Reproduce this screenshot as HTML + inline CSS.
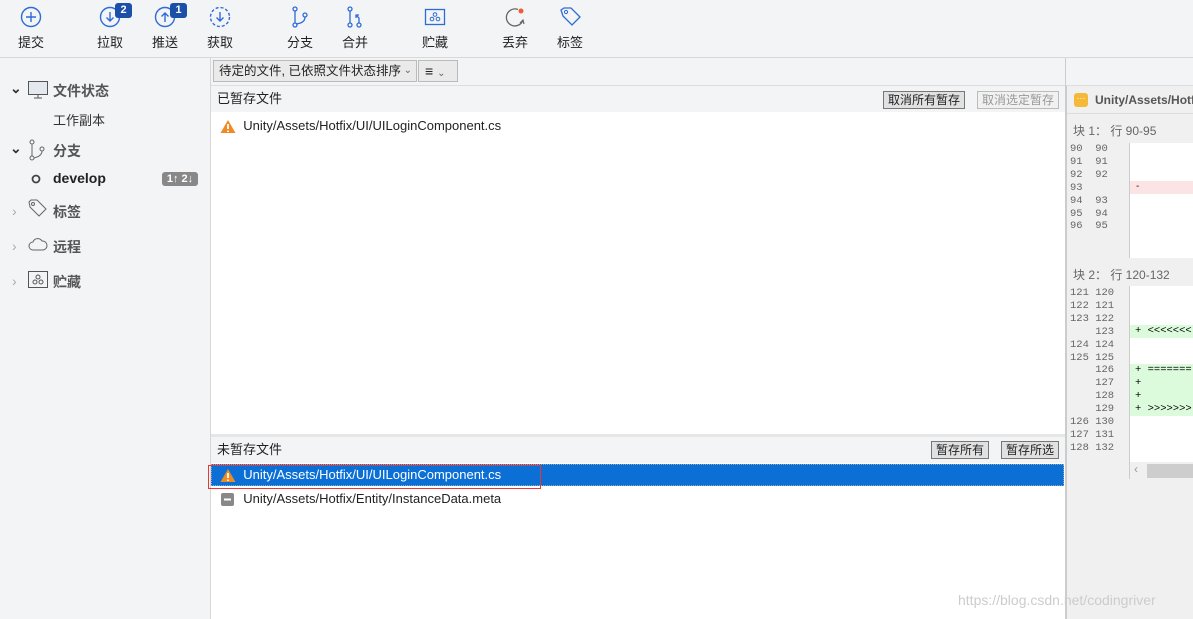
<!DOCTYPE html>
<html><head><meta charset="utf-8"><style>
*{box-sizing:border-box;margin:0;padding:0}
body{width:1193px;height:619px;overflow:hidden;background:#f3f4f6;font-family:"Liberation Sans","Noto Sans CJK SC",sans-serif;font-size:13px;color:#222;position:relative}
.abs{position:absolute}
.tb{left:0;top:0;width:1193px;height:58px;background:#f3f4f6;border-bottom:1px solid #d8d8d8}
.tbi{position:absolute;top:6px;width:50px;text-align:center;font-size:13px}
.tbi svg{display:block;margin:0 auto 4px}
.badge{position:absolute;top:-3px;background:#1c4fa8;color:#fff;font-size:11px;font-weight:bold;border-radius:3px;width:17px;height:15px;line-height:15px;text-align:center}
.side{left:0;top:58px;width:211px;height:561px;border-right:1px solid #d6d6d6;background:#f3f4f6}
.si{position:absolute;font-size:14px;color:#555}
.main{left:211px;top:58px;width:855px;height:561px;background:#fff}
.hdr{position:absolute;left:0;width:855px;background:#f3f4f6;font-size:13px;padding-left:6px}
.btn{position:absolute;border:1px solid #777;background:#e1e1e1;font-size:12px;height:18px;line-height:16px;padding:0 4px}
.row{position:absolute;font-size:13px;height:22px;line-height:22px}
.warn{display:inline-block;vertical-align:middle}
.rp{left:1066px;top:86px;width:127px;height:533px;background:#f0f0f0;border-left:1px solid #ccc}
.ln{position:absolute;font-family:"Liberation Mono",monospace;font-size:10.5px;color:#666;line-height:12.9px}
</style></head><body>
<div class="abs tb">
 <div class="tbi" style="left:6px"><svg width="22" height="22"><circle cx="11" cy="11" r="9.5" fill="none" stroke="#2d6bd6" stroke-width="1.4"/><path d="M11 6v10M6 11h10" stroke="#2d6bd6" stroke-width="1.4"/></svg>提交</div>
 <div class="tbi" style="left:85px"><svg width="22" height="22"><circle cx="11" cy="11" r="9.5" fill="none" stroke="#2d6bd6" stroke-width="1.4"/><path d="M11 6v9M7.5 11.5l3.5 3.5 3.5-3.5" fill="none" stroke="#2d6bd6" stroke-width="1.4"/></svg>拉取<div class="badge" style="left:30px">2</div></div>
 <div class="tbi" style="left:140px"><svg width="22" height="22"><circle cx="11" cy="11" r="9.5" fill="none" stroke="#2d6bd6" stroke-width="1.4"/><path d="M11 16V7M7.5 10.5L11 7l3.5 3.5" fill="none" stroke="#2d6bd6" stroke-width="1.4"/></svg>推送<div class="badge" style="left:30px">1</div></div>
 <div class="tbi" style="left:195px"><svg width="22" height="22"><circle cx="11" cy="11" r="9.5" fill="none" stroke="#2d6bd6" stroke-width="1.4" stroke-dasharray="3 2"/><path d="M11 6v9M7.5 11.5l3.5 3.5 3.5-3.5" fill="none" stroke="#2d6bd6" stroke-width="1.4"/></svg>获取</div>
 <div class="tbi" style="left:275px"><svg width="22" height="22"><circle cx="6" cy="3" r="2" fill="none" stroke="#2d6bd6" stroke-width="1.3"/><circle cx="6" cy="19" r="2" fill="none" stroke="#2d6bd6" stroke-width="1.3"/><circle cx="16" cy="9" r="2" fill="none" stroke="#2d6bd6" stroke-width="1.3"/><path d="M6 5v12M16 11q0 6-9 7" fill="none" stroke="#2d6bd6" stroke-width="1.3"/></svg>分支</div>
 <div class="tbi" style="left:330px"><svg width="22" height="22"><circle cx="6" cy="3" r="2" fill="none" stroke="#2d6bd6" stroke-width="1.3"/><circle cx="6" cy="19" r="2" fill="none" stroke="#2d6bd6" stroke-width="1.3"/><circle cx="15" cy="19" r="2" fill="none" stroke="#2d6bd6" stroke-width="1.3"/><path d="M6 5v12M15 17v-5l-3-3M12 12V9h3" fill="none" stroke="#2d6bd6" stroke-width="1.3"/></svg>合并</div>
 <div class="tbi" style="left:410px"><svg width="22" height="22"><rect x="1.5" y="3.5" width="19" height="15" fill="none" stroke="#2d6bd6" stroke-width="1.3"/><circle cx="11" cy="8.5" r="1.8" fill="none" stroke="#2d6bd6"/><circle cx="8" cy="13" r="1.8" fill="none" stroke="#2d6bd6"/><circle cx="14" cy="13" r="1.8" fill="none" stroke="#2d6bd6"/></svg>贮藏</div>
 <div class="tbi" style="left:490px"><svg width="22" height="22"><path d="M14 3.5A8.5 8.5 0 1 0 19 14" fill="none" stroke="#666" stroke-width="1.3"/><path d="M16 17l3-3 1 4" fill="none" stroke="#666" stroke-width="1.2"/><circle cx="17" cy="5" r="2.5" fill="#f05a3a"/></svg>丢弃</div>
 <div class="tbi" style="left:545px"><svg width="22" height="22"><path d="M2 4l3-2h7l9 9-8 8-9-9z" fill="none" stroke="#2d6bd6" stroke-width="1.3"/><circle cx="7" cy="6" r="1.6" fill="none" stroke="#2d6bd6"/></svg>标签</div>
</div>
<div class="abs" style="left:1066px;top:58px;width:127px;height:28px;background:#f3f4f6;border-bottom:1px solid #ddd"></div>
<div class="abs side">
 <div class="si" style="left:10px;top:22px;color:#333;font-weight:bold">⌄</div>
 <svg class="abs" style="left:28px;top:23px" width="20" height="18"><rect x="0.5" y="0.5" width="19" height="13" fill="#e4e8ef" stroke="#555"/><path d="M6 17h8M10 14v3" stroke="#555"/></svg>
 <div class="si" style="left:53px;top:23px;font-weight:bold">文件状态</div>
 <div class="si" style="left:53px;top:52px;font-size:13px;color:#333">工作副本</div>
 <div class="si" style="left:10px;top:82px;color:#333;font-weight:bold">⌄</div>
 <svg class="abs" style="left:28px;top:81px" width="20" height="22"><circle cx="4" cy="3" r="2" fill="none" stroke="#666"/><circle cx="4" cy="19" r="2" fill="none" stroke="#666"/><circle cx="14" cy="10" r="2" fill="none" stroke="#666"/><path d="M4 5v12M14 12q0 5-8 7" fill="none" stroke="#666"/></svg>
 <div class="si" style="left:53px;top:83px;font-weight:bold">分支</div>
 <svg class="abs" style="left:31px;top:116px" width="10" height="10"><circle cx="5" cy="5" r="3.5" fill="none" stroke="#444" stroke-width="1.8"/></svg>
 <div class="si" style="left:53px;top:112px;color:#222;font-weight:bold">develop</div>
 <div class="abs" style="left:162px;top:114px;width:36px;height:14px;background:#888;color:#fff;border-radius:3px;font-size:11px;font-weight:bold;text-align:center;line-height:14px">1↑ 2↓</div>
 <div class="si" style="left:12px;top:145px;color:#aaa">›</div>
 <svg class="abs" style="left:28px;top:141px" width="20" height="20"><path d="M1 3l2-2h6l9 9-7 7-9-9z" fill="none" stroke="#666"/><circle cx="5" cy="5" r="1.5" fill="none" stroke="#666"/></svg>
 <div class="si" style="left:53px;top:144px;font-weight:bold">标签</div>
 <div class="si" style="left:12px;top:180px;color:#aaa">›</div>
 <svg class="abs" style="left:28px;top:178px" width="20" height="16"><path d="M5 14a4 4 0 0 1 0-8 5 5 0 0 1 9-1 4 4 0 0 1 1 9z" fill="none" stroke="#666"/></svg>
 <div class="si" style="left:53px;top:179px;font-weight:bold">远程</div>
 <div class="si" style="left:12px;top:215px;color:#aaa">›</div>
 <svg class="abs" style="left:28px;top:213px" width="20" height="17"><rect x="0.5" y="0.5" width="19" height="16" fill="none" stroke="#555"/><circle cx="10" cy="6" r="2" fill="none" stroke="#555"/><circle cx="7" cy="11" r="2" fill="none" stroke="#555"/><circle cx="13" cy="11" r="2" fill="none" stroke="#555"/></svg>
 <div class="si" style="left:53px;top:214px;font-weight:bold">贮藏</div>
</div>
<div class="abs main">
 <div class="abs" style="left:0;top:0;width:855px;height:28px;background:#f3f4f6;border-bottom:1px solid #ddd"></div>
 <div class="abs" style="left:2px;top:2px;width:204px;height:22px;border:1px solid #bbb;background:#eaeaea;font-size:12.5px;line-height:20px;padding-left:5px;white-space:nowrap;overflow:hidden;padding-right:14px">待定的文件, 已依照文件状态排序<span style="position:absolute;right:4px;top:0;font-size:10px;color:#666">⌄</span></div>
 <div class="abs" style="left:207px;top:2px;width:40px;height:22px;border:1px solid #bbb;background:#eaeaea;font-size:14px;line-height:20px;padding-left:6px">≡ <span style="font-size:10px;color:#666">⌄</span></div>
 <div class="hdr" style="top:28px;height:26px;line-height:26px">已暂存文件</div>
 <div class="btn" style="left:672px;top:33px">取消所有暂存</div>
 <div class="btn" style="left:766px;top:33px;color:#999;border-color:#bbb;background:#f1f1f1">取消选定暂存</div>
 <div class="row" style="left:9px;top:57px"><svg class="warn" width="16" height="15"><path d="M8 1l7.5 13H.5z" fill="#f08a24"/><path d="M8 5v5M8 11.5v1.5" stroke="#fff" stroke-width="1.8"/></svg>&nbsp; Unity/Assets/Hotfix/UI/UILoginComponent.cs</div>
 <div class="abs" style="left:0;top:376px;width:855px;height:3px;background:#e6e6e6"></div>
 <div class="hdr" style="top:379px;height:26px;line-height:26px">未暂存文件</div>
 <div class="btn" style="left:720px;top:383px">暂存所有</div>
 <div class="btn" style="left:790px;top:383px">暂存所选</div>
 <div class="abs" style="left:0;top:406px;width:853px;height:22px;background:#0b6fd6;border:1px dotted #8ab"></div>
 <div class="abs" style="left:-3px;top:407px;width:333px;height:24px;border:1px solid #e33"></div>
 <div class="row" style="left:9px;top:406px;color:#fff"><svg class="warn" width="16" height="15"><path d="M8 1l7.5 13H.5z" fill="#f08a24"/><path d="M8 5v5M8 11.5v1.5" stroke="#fff" stroke-width="1.8"/></svg>&nbsp; Unity/Assets/Hotfix/UI/UILoginComponent.cs</div>
 <div class="row" style="left:9px;top:430px"><svg class="warn" width="16" height="15"><rect x="1" y="1" width="13" height="13" rx="2" fill="#888"/><path d="M4 7.5h7" stroke="#fff" stroke-width="2"/></svg>&nbsp; Unity/Assets/Hotfix/Entity/InstanceData.meta</div>
 <div class="abs" style="left:854px;top:0;width:1px;height:561px;background:#ccc"></div>
</div>
<div class="abs rp">
 <div class="abs" style="left:0;top:0;width:127px;height:28px;border-bottom:1px solid #ddd;font-size:12px;font-weight:bold;color:#555;line-height:28px;padding-left:28px;white-space:nowrap;overflow:hidden">Unity/Assets/Hotfix</div>
 <div class="abs" style="left:7px;top:7px;width:14px;height:14px;background:#f5b93a;border-radius:3px;color:#fff;font-size:9px;text-align:center;line-height:10px">···</div>
 <div class="abs" style="left:6px;top:36px;font-size:12px;color:#666">块 1： 行 90-95</div>
 <div class="abs" style="left:62px;top:57px;width:65px;height:115px;background:#fff;border-left:1px solid #ccc"></div>
 <div class="abs" style="left:63px;top:95px;width:64px;height:13px;background:#fde4e4;font-size:10px;padding-left:6px">-</div>
 <div class="ln" style="left:3px;top:57px">90&nbsp;&nbsp;90<br>91&nbsp;&nbsp;91<br>92&nbsp;&nbsp;92<br>93<br>94&nbsp;&nbsp;93<br>95&nbsp;&nbsp;94<br>96&nbsp;&nbsp;95</div>
 <div class="abs" style="left:6px;top:180px;font-size:12px;color:#666">块 2： 行 120-132</div>
 <div class="abs" style="left:62px;top:200px;width:65px;height:176px;background:#fff;border-left:1px solid #ccc"></div>
 <div class="abs ln" style="left:63px;top:239px;width:64px;height:13px;background:#dcfbdc;color:#000;padding-left:5px">+ &lt;&lt;&lt;&lt;&lt;&lt;&lt;</div>
 <div class="abs ln" style="left:63px;top:278px;width:64px;height:52px;background:#dcfbdc;color:#000;padding-left:5px">+ =======<br>+<br>+<br>+ &gt;&gt;&gt;&gt;&gt;&gt;&gt;</div>
 <div class="ln" style="left:3px;top:201px">121&nbsp;120<br>122&nbsp;121<br>123&nbsp;122<br>&nbsp;&nbsp;&nbsp;&nbsp;123<br>124&nbsp;124<br>125&nbsp;125<br>&nbsp;&nbsp;&nbsp;&nbsp;126<br>&nbsp;&nbsp;&nbsp;&nbsp;127<br>&nbsp;&nbsp;&nbsp;&nbsp;128<br>&nbsp;&nbsp;&nbsp;&nbsp;129<br>126&nbsp;130<br>127&nbsp;131<br>128&nbsp;132</div>
 <div class="abs" style="left:62px;top:376px;width:65px;height:17px;background:#f0f0f0;border-left:1px solid #ccc;color:#999;font-size:12px;padding-left:4px">‹</div>
 <div class="abs" style="left:80px;top:378px;width:47px;height:14px;background:#cdcdcd"></div>
</div>
<div class="abs" style="left:958px;top:592px;font-size:14px;color:#ccc">https://blog.csdn.net/codingriver</div>
</body></html>
